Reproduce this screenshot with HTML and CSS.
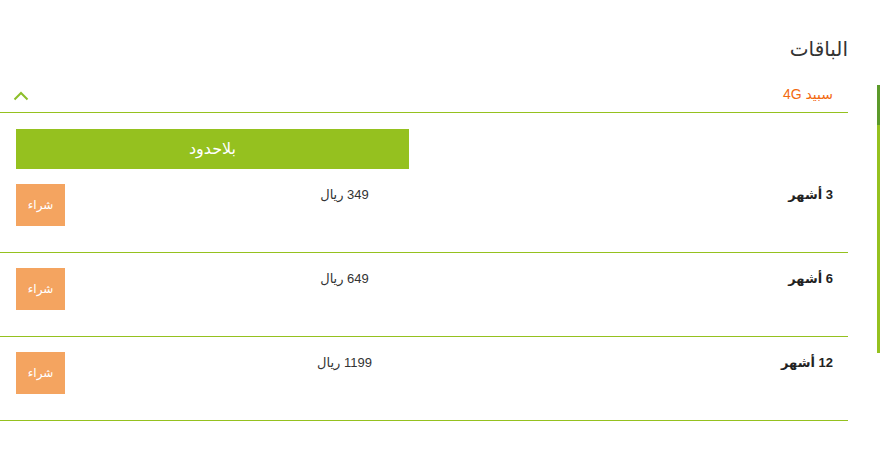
FILE: index.html
```html
<!DOCTYPE html>
<html dir="rtl" lang="ar">
<head>
    <meta charset="utf-8">
    <title>الباقات</title>
    <link rel="stylesheet" href="styles.css">
</head>
<body>
    <div class="side-line"><span class="side-thumb"></span></div>

    <div class="content">
        <h2 class="page-title">الباقات</h2>

        <div class="tab-head">
            <span class="tab-name">سبيد 4G</span>
            <svg class="chevron" width="16" height="10" viewBox="0 0 16 10">
                <polyline points="1.5,8.5 8,2 14.5,8.5" fill="none" stroke="#8dbf2a" stroke-width="2"/>
            </svg>
        </div>

        <div class="plans">
            <div class="plan-grid">
                <div class="unlimited">بلاحدود</div>
            </div>

            <div class="plan-row">
                <div class="plan-name">3 أشهر</div>
                <div class="plan-price">349 ريال</div>
                <div class="plan-buy"><button class="buy">شراء</button></div>
            </div>
            <div class="plan-row">
                <div class="plan-name">6 أشهر</div>
                <div class="plan-price">649 ريال</div>
                <div class="plan-buy"><button class="buy">شراء</button></div>
            </div>
            <div class="plan-row">
                <div class="plan-name">12 أشهر</div>
                <div class="plan-price">1199 ريال</div>
                <div class="plan-buy"><button class="buy">شراء</button></div>
            </div>
        </div>
    </div>
</body>
</html>
```

FILE: styles.css
```css
body { margin: 0; display: flex; gap: 29px; font-family: "Liberation Sans", "DejaVu Sans", sans-serif; color: #333; background: #fff; }
.side-line { width: 3px; margin-top: 85px; height: 268px; background: #95c11f; flex: none; }
.side-thumb { display: block; height: 40px; background: #5c9a2a; }
.content { width: 848px; flex: none; }
.page-title { margin: 0; padding-top: 37px; font-size: 20px; font-weight: normal; line-height: 24px; color: #333; }
.tab-head { margin-top: 23px; height: 28px; padding: 0 15px 0 13px; border-bottom: 1px solid #95c11f; display: flex; justify-content: space-between; align-items: flex-start; }
.tab-name { margin-top: 1px; font-size: 14px; line-height: 18px; color: #f26a10; }
.chevron { margin-top: 7px; }
.plan-grid, .plan-row { display: grid; grid-template-columns: 424px 129px 264px; padding: 0 15px 0 16px; }
.unlimited { grid-column: 2 / 4; margin-top: 16px; height: 40px; line-height: 40px; background: #95c11f; color: #fff; text-align: center; font-size: 16px; }
.plan-row { padding-top: 15px; padding-bottom: 26px; border-bottom: 1px solid #95c11f; align-items: start; font-size: 13px; line-height: 18px; }
.plan-name { margin-top: 2px; font-weight: bold; color: #222; }
.plan-price { margin-top: 2px; text-align: center; color: #333; }
.plan-buy { display: flex; justify-content: flex-end; }
.buy { width: 49px; height: 42px; border: none; padding: 0; background: #f4a460; color: #fff; font-family: inherit; font-size: 12px; cursor: pointer; }
```
